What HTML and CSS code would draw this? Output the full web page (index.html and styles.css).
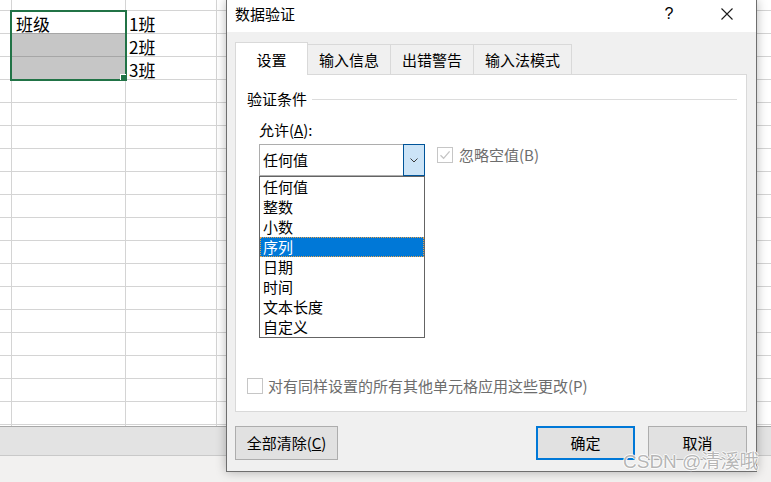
FILE: index.html
```html
<!DOCTYPE html>
<html lang="zh-CN">
<head>
<meta charset="utf-8">
<title>数据验证</title>
<link rel="stylesheet" href="styles.css">
</head>
<body>
<div class="app">
  <div class="sheet">
    <div class="cells">
      <div class="cell col-a row-1">班级</div>
      <div class="cell col-b row-1">1班</div>
      <div class="cell col-a row-2 sel-fill"></div>
      <div class="cell col-b row-2">2班</div>
      <div class="cell col-a row-3 sel-fill"></div>
      <div class="cell col-b row-3">3班</div>
    </div>
    <div class="selection"><span class="fill-handle"></span></div>
  </div>
  <div class="sheet-tabs"></div>

  <div class="dialog">
    <div class="titlebar">
      <span class="title">数据验证</span>
      <span class="tb-help">?</span>
      <span class="tb-close">
        <svg width="12" height="12" viewBox="0 0 12 12"><path d="M0.5 0.5 L11.5 11.5 M11.5 0.5 L0.5 11.5" stroke="#1a1a1a" stroke-width="1.1" fill="none"/></svg>
      </span>
    </div>
    <div class="dlg-body">
      <div class="tabs">
        <div class="tab active">设置</div>
        <div class="tab">输入信息</div>
        <div class="tab">出错警告</div>
        <div class="tab">输入法模式</div>
      </div>
      <div class="panel">
        <div class="group-head"><span>验证条件</span><span class="group-line"></span></div>
        <div class="field">
          <div class="label">允许(<u>A</u>):</div>
          <div class="field-row">
            <div class="combo">
              <span class="combo-text">任何值</span>
              <span class="combo-btn">
                <svg width="8" height="5" viewBox="0 0 8 5"><path d="M0.5 0.5 L4 4 L7.5 0.5" stroke="#3c3c3c" stroke-width="1" fill="none"/></svg>
              </span>
              <ul class="listbox">
                <li>任何值</li>
                <li>整数</li>
                <li>小数</li>
                <li class="selected">序列</li>
                <li>日期</li>
                <li>时间</li>
                <li>文本长度</li>
                <li>自定义</li>
              </ul>
            </div>
            <div class="check">
              <span class="box">
                <svg width="14" height="14" viewBox="0 0 14 14"><path d="M2.5 7.2 L5.6 10.3 L11.6 3.3" stroke="#c4c4c4" stroke-width="1.3" fill="none"/></svg>
              </span>
              <span class="check-text">忽略空值(B)</span>
            </div>
          </div>
        </div>
        <div class="apply-row">
          <span class="box"></span>
          <span class="check-text">对有同样设置的所有其他单元格应用这些更改(P)</span>
        </div>
      </div>
      <div class="footer">
        <button class="btn btn-clear">全部清除(<u>C</u>)</button>
        <button class="btn btn-ok">确定</button>
        <button class="btn btn-cancel">取消</button>
      </div>
    </div>
  </div>

  <div class="watermark">CSDN @清溪哦</div>
</div>
</body>
</html>
```

FILE: styles.css
```css
* {
  box-sizing: border-box;
}

html,
body {
  margin: 0;
  padding: 0;
}

body {
  width: 771px;
  height: 482px;
  overflow: hidden;
  background: #f2f1f0;
  font-family: "Noto Sans CJK SC", "Noto Sans", sans-serif;
}

.app {
  position: relative;
  width: 771px;
  height: 482px;
}

/* ---------- spreadsheet ---------- */
.sheet {
  position: relative;
  height: 426px;
  background-color: #fff;
  background-image:
    linear-gradient(#d4d4d4, #d4d4d4),
    linear-gradient(#d4d4d4, #d4d4d4),
    linear-gradient(#d4d4d4, #d4d4d4),
    linear-gradient(to bottom, #d4d4d4 1px, transparent 1px);
  background-size: 1px 100%, 1px 100%, 1px 100%, 100% 23px;
  background-position: 11px 0, 125px 0, 216px 0, 0 10px;
  background-repeat: no-repeat, no-repeat, no-repeat, repeat-y;
}

.cells {
  display: grid;
  grid-template-columns: 11px 114px 91px;
  grid-template-rows: 10px 23px 23px 23px;
  font-size: 17px;
  color: #000;
}

.cell {
  padding-top: 4px;
  line-height: 20px;
  white-space: nowrap;
}

.col-a {
  grid-column: 2;
  padding-left: 5px;
}

.col-b {
  grid-column: 3;
  padding-left: 4px;
}

.row-1 { grid-row: 2; }
.row-2 { grid-row: 3; }
.row-3 { grid-row: 4; }

.sel-fill {
  background: #c6c6c6;
  border-top: 1px solid #a6a6a6;
  margin-left: 1px;
}

.selection {
  position: absolute;
  left: 10px;
  top: 10px;
  width: 117px;
  height: 71px;
  border: 2px solid #217346;
}

.fill-handle {
  position: absolute;
  right: -2px;
  bottom: -2px;
  width: 6px;
  height: 6px;
  background: #217346;
  box-shadow: -1px -1px 0 #fff;
}

.sheet-tabs {
  height: 30px;
  background: #e3e3e3;
  border-top: 1px solid #a8a8a8;
  border-bottom: 1px solid #c9c9c9;
}

/* ---------- dialog ---------- */
.dialog {
  position: absolute;
  left: 226px;
  top: 0;
  width: 531px;
  height: 472px;
  border: 1px solid #6e6e6e;
  border-top: 0;
  background: #f0f0f0;
  box-shadow: 0 0 10px rgba(0, 0, 0, 0.28);
  display: flex;
  flex-direction: column;
  font-size: 15px;
  color: #000;
}

.titlebar {
  height: 32px;
  background: #fff;
  display: flex;
  align-items: flex-start;
  padding: 4px 17px 0 8px;
  line-height: 20px;
}

.title {
  flex: 1;
}

.tb-help {
  width: 24px;
  text-align: center;
  font-size: 16px;
  font-family: "Liberation Sans", "Noto Sans", sans-serif;
}

.tb-close {
  width: 24px;
  height: 20px;
  margin-left: 34px;
  display: flex;
  align-items: center;
  justify-content: center;
}

.dlg-body {
  flex: 1;
  padding: 10px 0 0 8px;
  display: flex;
  flex-direction: column;
}

.tabs {
  position: relative;
  z-index: 1;
  display: flex;
  align-items: flex-end;
  height: 33px;
}

.tab {
  height: 30px;
  margin-bottom: 1px;
  padding: 5px 11px 0;
  line-height: 20px;
  border-top: 1px solid #d9d9d9;
  border-right: 1px solid #d9d9d9;
  white-space: nowrap;
}

.tab.active {
  width: 73px;
  height: 33px;
  margin-bottom: 0;
  padding: 7px 0 0;
  text-align: center;
  background: #fff;
  border-left: 1px solid #d9d9d9;
}

.panel {
  width: 512px;
  height: 338px;
  margin-top: -1px;
  background: #fff;
  border: 1px solid #d9d9d9;
  padding: 14px 9px 15px 11px;
  display: flex;
  flex-direction: column;
}

.group-head {
  display: flex;
  align-items: center;
  line-height: 20px;
}

.group-line {
  flex: 1;
  height: 1px;
  margin-left: 5px;
  background: #dcdcdc;
}

.field {
  padding-left: 12px;
  margin-top: 11px;
}

.label {
  line-height: 20px;
}

.field-row {
  display: flex;
  align-items: flex-start;
  margin-top: 4px;
}

.combo {
  position: relative;
  width: 166px;
  height: 32px;
  border: 1px solid #adadad;
  background: #fff;
  display: flex;
}

.combo-text {
  flex: 1;
  padding-left: 3px;
  line-height: 30px;
}

.combo-btn {
  width: 22px;
  margin: -1px -1px -1px 0;
  border: 1px solid #005499;
  background: #cce4f7;
  display: flex;
  align-items: center;
  justify-content: center;
}

.listbox {
  position: absolute;
  z-index: 2;
  left: -1px;
  top: calc(100% + 1px);
  width: 166px;
  margin: 0;
  padding: 0;
  list-style: none;
  background: #fff;
  border: 1px solid #646464;
}

.listbox li {
  height: 20px;
  line-height: 20px;
  padding-left: 3px;
  white-space: nowrap;
}

.listbox li.selected {
  background: #0078d7;
  color: #fff;
  border: 1px dotted #e9a24a;
  padding-left: 2px;
  line-height: 18px;
}

.check {
  display: flex;
  align-items: center;
  height: 20px;
  margin-top: 1px;
  margin-left: 12px;
}

.box {
  width: 16px;
  height: 16px;
  flex: none;
  border: 1px solid #c6c6c6;
  background: #fff;
  display: flex;
  align-items: center;
  justify-content: center;
}

.check-text {
  margin-left: 6px;
  line-height: 20px;
  color: #6d6d6d;
  white-space: nowrap;
}

.apply-row {
  margin-top: auto;
  display: flex;
  align-items: center;
  height: 20px;
}

.apply-row .check-text {
  margin-left: 5px;
}

.footer {
  display: flex;
  width: 512px;
  margin-top: 14px;
}

.btn {
  height: 34px;
  padding: 0;
  border: 1px solid #adadad;
  background: #e1e1e1;
  font-family: inherit;
  font-size: 15px;
  line-height: 20px;
  color: #000;
}

.btn-clear {
  width: 103px;
}

.btn-ok {
  width: 99px;
  margin-left: auto;
  border: 2px solid #0078d7;
}

.btn-cancel {
  width: 99px;
  margin-left: 13px;
}

.watermark {
  position: absolute;
  left: 623px;
  top: 452px;
  font-family: "Liberation Sans", "Noto Sans CJK SC", sans-serif;
  font-size: 19px;
  line-height: 20px;
  color: rgba(150, 150, 150, 0.7);
  text-shadow: 1px 0 0 rgba(255, 255, 255, 0.8), -1px 0 0 rgba(255, 255, 255, 0.8), 0 1px 0 rgba(255, 255, 255, 0.8), 0 -1px 0 rgba(255, 255, 255, 0.8);
  white-space: nowrap;
}
```
